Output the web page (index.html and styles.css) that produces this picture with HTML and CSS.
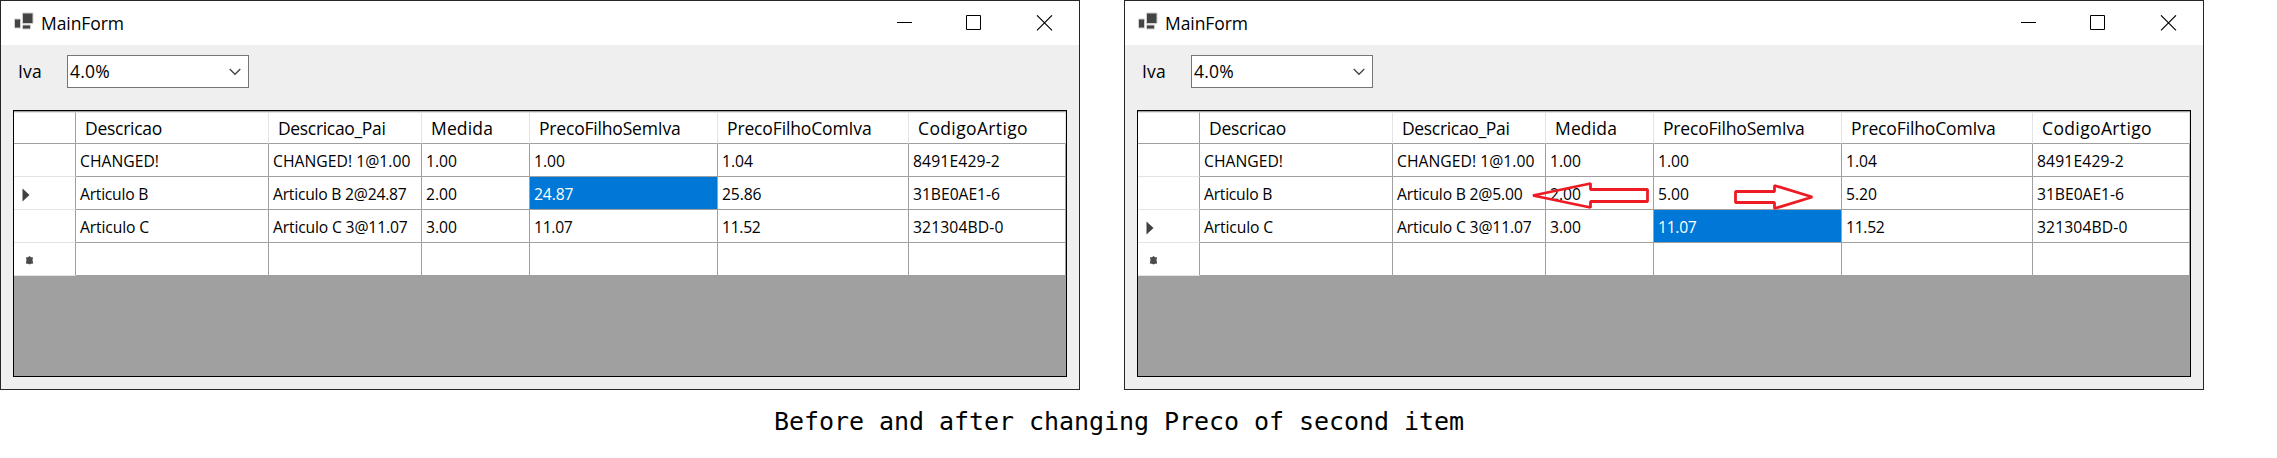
FILE: index.html
```html
<!DOCTYPE html>
<html lang="en">
<head>
<meta charset="utf-8">
<title>MainForm</title>
<link rel="stylesheet" href="styles.css">
</head>
<body>
<main class="page">
<div class="windows">
<section class="window">
<header class="titlebar">
<svg class="app-icon" width="22" height="20" viewBox="0 .5 22 20"><g fill="#444" stroke="#d0d0d0" stroke-width="1"><path d="M9.500 1.500h10.500v10.500h-10.500zM1.500 7.500h6v9h-6zM9.500 13.500h8v4h-8z"/></g></svg>
<span class="title"><b data-w="83">MainForm</b></span>
<svg class="controls" width="156" height="16" viewBox="0 0 156 16" fill="none" stroke="#000"><path d="M0 7.500H15M69.500.500h14v14h-14z"/><path d="M140 .300L155 15.300M155 .300L140 15.300" stroke-width="1.100"/></svg>
</header>
<div class="toolbar">
<label class="label"><b data-w="24">Iva</b></label>
<div class="combo"><span class="value"><b data-w="40">4.0%</b></span><svg width="12" height="8" viewBox="0 0 12 8" fill="none" stroke="#444" stroke-width="1.300"><path d="M.700 1L6 6.300L11.300 1"/></svg></div>
</div>
<div class="grid">
<div class="row head"><span></span><span><b data-w="77">Descricao</b></span><span><b data-w="107.5">Descricao_Pai</b></span><span><b data-w="62">Medida</b></span><span><b data-w="141.5">PrecoFilhoSemIva</b></span><span><b data-w="144.5">PrecoFilhoComIva</b></span><span><b data-w="110">CodigoArtigo</b></span></div>
<div class="row"><span></span><span><b data-w="79">CHANGED!</b></span><span><b data-w="137.5">CHANGED! 1@1.00</b></span><span><b data-w="31">1.00</b></span><span><b data-w="31">1.00</b></span><span><b data-w="31">1.04</b></span><span><b data-w="87">8491E429-2</b></span></div>
<div class="row"><span><svg class="pointer" width="8" height="14" viewBox="0 0 8 14"><path d="M.500.500L7.500 7L.500 13.500z" fill="#404040"/></svg></span><span><b data-w="68">Articulo B</b></span><span><b data-w="133.5">Articulo B 2@24.87</b></span><span><b data-w="31">2.00</b></span><span class="selected"><b data-w="39.5">24.87</b></span><span><b data-w="39.5">25.86</b></span><span><b data-w="87">31BE0AE1-6</b></span></div>
<div class="row"><span></span><span><b data-w="69">Articulo C</b></span><span><b data-w="134.5">Articulo C 3@11.07</b></span><span><b data-w="31">3.00</b></span><span><b data-w="38.5">11.07</b></span><span><b data-w="38.5">11.52</b></span><span><b data-w="90.5">321304BD-0</b></span></div>
<div class="row"><span><svg class="star" width="9" height="9" viewBox="0 0 9 9"><path d="M4.500 0L6 1.300H8L7.500 4L8.200 7.500L6 7.800L4.500 8.500L3 7.800L.800 7.500L1.500 4L1 1.300H3z" fill="#4b4b4b"/></svg></span><span></span><span></span><span></span><span></span><span></span><span></span></div>
</div>
</section>
<section class="window">
<header class="titlebar">
<svg class="app-icon" width="22" height="20" viewBox="0 .5 22 20"><g fill="#444" stroke="#d0d0d0" stroke-width="1"><path d="M9.500 1.500h10.500v10.500h-10.500zM1.500 7.500h6v9h-6zM9.500 13.500h8v4h-8z"/></g></svg>
<span class="title"><b data-w="83">MainForm</b></span>
<svg class="controls" width="156" height="16" viewBox="0 0 156 16" fill="none" stroke="#000"><path d="M0 7.500H15M69.500.500h14v14h-14z"/><path d="M140 .300L155 15.300M155 .300L140 15.300" stroke-width="1.100"/></svg>
</header>
<div class="toolbar">
<label class="label"><b data-w="24">Iva</b></label>
<div class="combo"><span class="value"><b data-w="40">4.0%</b></span><svg width="12" height="8" viewBox="0 0 12 8" fill="none" stroke="#444" stroke-width="1.300"><path d="M.700 1L6 6.300L11.300 1"/></svg></div>
</div>
<div class="grid">
<div class="row head"><span></span><span><b data-w="77">Descricao</b></span><span><b data-w="107.5">Descricao_Pai</b></span><span><b data-w="62">Medida</b></span><span><b data-w="141.5">PrecoFilhoSemIva</b></span><span><b data-w="144.5">PrecoFilhoComIva</b></span><span><b data-w="110">CodigoArtigo</b></span></div>
<div class="row"><span></span><span><b data-w="79">CHANGED!</b></span><span><b data-w="137.5">CHANGED! 1@1.00</b></span><span><b data-w="31">1.00</b></span><span><b data-w="31">1.00</b></span><span><b data-w="31">1.04</b></span><span><b data-w="87">8491E429-2</b></span></div>
<div class="row"><span></span><span><b data-w="68">Articulo B</b></span><span><b data-w="125.5">Articulo B 2@5.00</b></span><span><b data-w="31">2.00</b></span><span><b data-w="31">5.00</b></span><span><b data-w="31">5.20</b></span><span><b data-w="87">31BE0AE1-6</b></span></div>
<div class="row"><span><svg class="pointer" width="8" height="14" viewBox="0 0 8 14"><path d="M.500.500L7.500 7L.500 13.500z" fill="#404040"/></svg></span><span><b data-w="69">Articulo C</b></span><span><b data-w="134.5">Articulo C 3@11.07</b></span><span><b data-w="31">3.00</b></span><span class="selected"><b data-w="38.5">11.07</b></span><span><b data-w="38.5">11.52</b></span><span><b data-w="90.5">321304BD-0</b></span></div>
<div class="row"><span><svg class="star" width="9" height="9" viewBox="0 0 9 9"><path d="M4.500 0L6 1.300H8L7.500 4L8.200 7.500L6 7.800L4.500 8.500L3 7.800L.800 7.500L1.500 4L1 1.300H3z" fill="#4b4b4b"/></svg></span><span></span><span></span><span></span><span></span><span></span><span></span></div>
</div>
<svg class="arrows" width="290" height="32" viewBox="1530 180 290 32" fill="none" stroke="#ed1c24" stroke-width="2.800"><path d="M1533 195.500L1590.500 183.500V189.500H1647.500V201.500H1590.500V207.500z" stroke-linejoin="bevel"/><path d="M1735.500 191.500H1774.500V185.500L1812.300 197L1774.500 208.500V202.500H1735.500z" stroke-linejoin="bevel"/></svg>
</section>
</div>
<p class="caption">Before and after changing Preco of second item</p>
</main>
<script src="fit.js"></script>
</body>
</html>
```
FILE: fit.js
```js
// Spaces each label's letters so that it takes its data-w width.
document.querySelectorAll('[data-w]').forEach(function (el) {
  var gap = Number(el.dataset.w) - el.getBoundingClientRect().width;
  el.style.letterSpacing = gap / el.textContent.length + 'px';
});
```
FILE: styles.css
```css
* { box-sizing: border-box; }
body { margin: 0; background: #fff; color: #000; font-family: "Open Sans", "Noto Sans", sans-serif; font-size: 17.5px; }
b { font-weight: 400; white-space: nowrap; }
svg { display: block; flex: none; }
.page { width: 2277px; height: 458px; overflow: hidden; }
.windows { display: flex; gap: 44px; }
.window { position: relative; width: 1080px; height: 390px; border: 1px solid #262626; background: #efefef; }
.titlebar { display: flex; height: 44px; background: #fff; padding: 0 26px 0 12px; }
.app-icon { margin-top: 11px; }
.title { margin: 10px auto 0 6px; line-height: 24px; }
.controls { margin-top: 14px; }
.toolbar { display: flex; height: 65px; padding: 10px 0 0 17px; }
.label { width: 49px; line-height: 32px; }
.combo { display: flex; align-items: center; justify-content: space-between; width: 182px; height: 33px; padding: 0 7px 0 2px; border: 1px solid #767676; background: #fff; }
.value { line-height: 31px; }
.grid { width: 1054px; height: 267px; margin-left: 12px; border: 1px solid #000; background: #a0a0a0; }
.row { display: grid; grid-template-columns: 62px 193px 153px 108px 188px 191px 157px; grid-template-rows: 100%; height: 33px; font-size: 15.7px; line-height: 34px; }
.row > span { display: block; min-height: 0; padding-left: 4px; border-right: 1px solid #a0a0a0; border-bottom: 1px solid #a0a0a0; background: #fff; white-space: nowrap; }
.row > span:first-child { padding-left: 8px; border-bottom-color: #e3e3e3; }
.row > .selected { background: #0078d7; color: #fff; }
.head { border-top: 1px solid #a0a0a0; font-size: 17.5px; line-height: 31px; }
.head > span { padding-left: 9px; border-top: 1px solid #e3e3e3; border-right-color: #e3e3e3; }
.row.head > span:first-child { border-right-color: #a0a0a0; border-bottom-color: #a0a0a0; }
.pointer { margin-top: 11px; }
.star { margin: 13px 0 0 3px; }
.arrows { position: absolute; left: 405px; top: 179px; }
.caption { width: 690px; margin: 16px 0 0 774px; font: 25px/32px "DejaVu Sans Mono", monospace; letter-spacing: -0.05px; white-space: nowrap; }
```
